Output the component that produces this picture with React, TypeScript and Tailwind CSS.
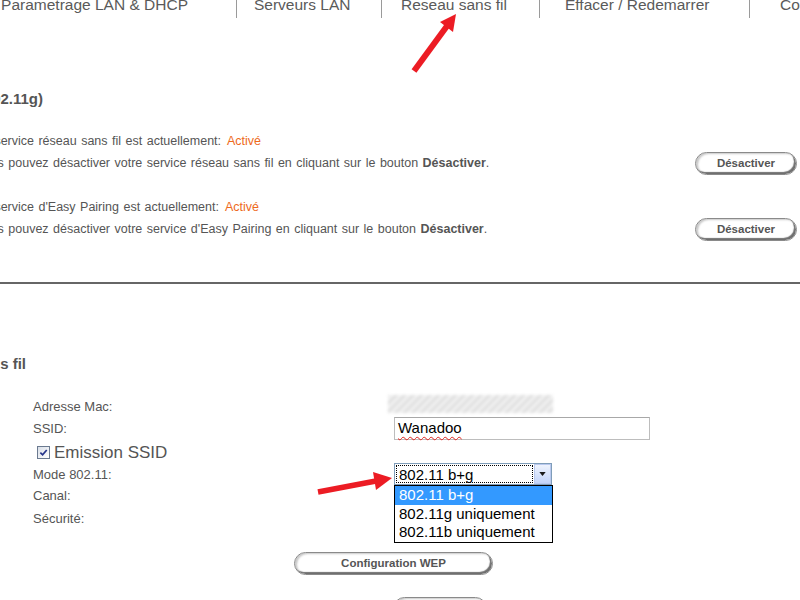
import React from "react";

function PillButton({ label, className = "" }: { label: string; className?: string }) {
  return (
    <button
      type="button"
      className={`flex h-[23px] shrink-0 items-center justify-center rounded-full border border-[#8a8a8a] bg-white text-[11.5px] font-bold text-[#555] shadow-[inset_-2px_-2px_1px_#6f6f6f,inset_2px_1px_2px_#c8c8c8] ${className}`}
    >
      {label}
    </button>
  );
}

const tabs = [
  { label: "Parametrage LAN & DHCP", cls: "w-[236px] justify-end pr-[48px]" },
  { label: "Serveurs LAN", cls: "w-[144px] pl-[17px]" },
  { label: "Reseau sans fil", cls: "w-[157px] pl-[19px]" },
  { label: "Effacer / Redemarrer", cls: "w-[209px] pl-[25px]" },
  { label: "Configuration", cls: "w-[200px] pl-[30px]" },
];

function TopNav() {
  return (
    <nav className="flex h-[18px]">
      {tabs.map((t, i) => (
        <React.Fragment key={t.label}>
          {i > 0 && <div className="h-[18px] w-px shrink-0 bg-[#9a9a9a]" />}
          <div className={`flex shrink-0 ${t.cls}`}>
            <span className="-mt-[4px] block shrink-0 whitespace-nowrap text-[15.5px] leading-[18px] text-[#5a5a5a]">
              {t.label}
            </span>
          </div>
        </React.Fragment>
      ))}
    </nav>
  );
}

function ServiceBlock({ name, className = "" }: { name: string; className?: string }) {
  return (
    <div className={`text-[12.5px] [word-spacing:1px] ${className}`}>
      <div className="-ml-[24px] h-[21px] whitespace-nowrap leading-[21px]">
        Le service {name} est actuellement:
        <span className="ml-[6px] text-[#ee6a1c]">Activé</span>
      </div>
      <div className="flex h-[23px] items-center">
        <p className="-ml-[24px] whitespace-nowrap">
          Vous pouvez désactiver votre service {name} en cliquant sur le bouton <b>Désactiver</b>.
        </p>
        <PillButton label="Désactiver" className="ml-auto mr-[3px] w-[102px] [word-spacing:0px]" />
      </div>
    </div>
  );
}

function FormRow({ label, h, children }: { label: React.ReactNode; h: string; children?: React.ReactNode }) {
  return (
    <div className={`flex items-start ${h}`}>
      <div className="w-[361px] shrink-0 text-[13px] leading-[20px]">{label}</div>
      <div className="relative">{children}</div>
    </div>
  );
}

export default function App() {
  return (
    <div className="relative h-[600px] w-[800px] overflow-hidden bg-white font-['Liberation_Sans',Arial,sans-serif] text-[#555]">
      <TopNav />

      <div className="mt-[71px] flex w-[43px] justify-end">
        <h2 className="shrink-0 whitespace-nowrap text-[15px] font-bold leading-[20px]">Réseau sans fil (802.11g)</h2>
      </div>

      <ServiceBlock name="réseau sans fil" className="mt-[22px]" />
      <ServiceBlock name="d'Easy Pairing" className="mt-[22px]" />

      <div className="mt-[41px] h-[2px] bg-[#666]" />

      <div className="mt-[70px] flex w-[26px] justify-end">
        <h2 className="shrink-0 whitespace-nowrap text-[15px] font-bold leading-[20px]">Paramètres réseau sans fil</h2>
      </div>

      <div className="mt-[23px] pl-[33px]">
        <FormRow label="Adresse Mac:" h="h-[22px]">
          <div className="-ml-[6px] -mt-[2px] h-[18px] w-[165px] bg-[repeating-linear-gradient(135deg,#dadada_0px,#f7f7f7_3px,#dadada_6px)] blur-[1.5px]" />
        </FormRow>
        <FormRow label="SSID:" h="h-[23px]">
          <div className="-mt-[2px] flex h-[23px] w-[256px] items-center border border-[#bdbdbd] border-t-[#a8a8a8] bg-white pl-[3px]">
            <span className="text-[15px] text-black underline decoration-[#e0201a] decoration-wavy decoration-1 underline-offset-[3px]">
              Wanadoo
            </span>
          </div>
        </FormRow>
        <div className="flex h-[23px] items-start">
          <div className="ml-[4px] mt-[4px] flex h-[13px] w-[13px] items-center justify-center border border-[#6b7a90] bg-[linear-gradient(135deg,#d9dfe8,#ffffff)]">
            <svg viewBox="0 0 10 10" className="h-[9px] w-[9px]">
              <path d="M1.5 5.2 L4 7.6 L8.6 2.2" stroke="#25348a" strokeWidth="1.9" fill="none" />
            </svg>
          </div>
          <span className="ml-[4px] text-[17px] leading-[22px]">Emission SSID</span>
        </div>
        <FormRow label="Mode 802.11:" h="h-[21px]">
          <div className="relative -mt-[2px] flex h-[22px] w-[158px] border border-[#7f9db9] bg-white">
            <div className="m-[1px] flex flex-1 items-center border border-dotted border-black pl-[2px] text-[15px] leading-none text-black">
              802.11 b+g
            </div>
            <div className="flex w-[17px] items-center justify-center border border-[#b9c9ef] bg-[linear-gradient(#eef3fd,#c3d4fa)]">
              <svg viewBox="0 0 8 5" className="h-[4px] w-[7px]">
                <path d="M0 0 H8 L4 5 Z" fill="#1a1a1a" />
              </svg>
            </div>
            <ul className="absolute left-[-1px] top-[21px] z-10 w-[159px] border border-black bg-white text-[15px] leading-[18.5px] text-black">
              <li className="h-[18.5px] bg-[#3399ff] pl-[4px] text-white">802.11 b+g</li>
              <li className="h-[18.5px] pl-[4px]">802.11g uniquement</li>
              <li className="h-[18.5px] pl-[4px]">802.11b uniquement</li>
            </ul>
          </div>
        </FormRow>
        <FormRow label="Canal:" h="h-[23px]" />
        <FormRow label="Sécurité:" h="h-[20px]" />

        <PillButton label="Configuration WEP" className="ml-[261px] mt-[23px] w-[199px]" />
        <PillButton label="Appliquer" className="ml-[360px] mt-[22px] w-[94px]" />
      </div>

      <svg className="pointer-events-none absolute inset-0" width="800" height="600">
        <line x1="414" y1="71" x2="447" y2="26" stroke="#ec1c24" strokeWidth="6" />
        <polygon points="456,14 453,32 440,22" fill="#ec1c24" />
        <line x1="318" y1="492" x2="376" y2="481" stroke="#ec1c24" strokeWidth="5.5" />
        <polygon points="392,478 376,490 373,472" fill="#ec1c24" />
      </svg>
    </div>
  );
}
